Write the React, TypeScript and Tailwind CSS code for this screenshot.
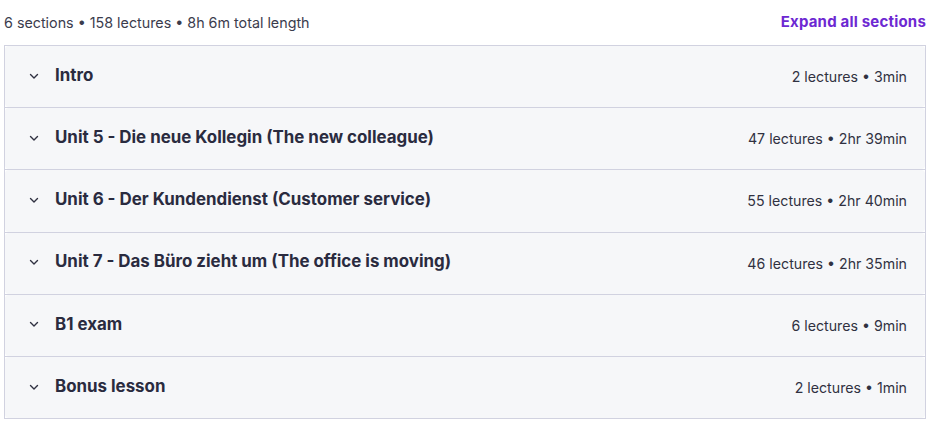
import React from "react";

const sections = [
  { title: "Intro", meta: "2 lectures • 3min" },
  { title: "Unit 5 - Die neue Kollegin (The new colleague)", meta: "47 lectures • 2hr 39min" },
  { title: "Unit 6 - Der Kundendienst (Customer service)", meta: "55 lectures • 2hr 40min" },
  { title: "Unit 7 - Das Büro zieht um (The office is moving)", meta: "46 lectures • 2hr 35min" },
  { title: "B1 exam", meta: "6 lectures • 9min" },
  { title: "Bonus lesson", meta: "2 lectures • 1min" },
];

const Chevron = () => (
  <svg width="12" height="12" viewBox="0 0 12 12" fill="none" className="shrink-0">
    <path d="M2.5 4.5 6 8l3.5-3.5" stroke="#303141" strokeWidth="1.4" strokeLinecap="round" strokeLinejoin="round" />
  </svg>
);

export default function App() {
  return (
    <div className="w-[931px] h-[424px] bg-white pl-[4px] pr-[5px] font-['Inter',sans-serif] text-[#303141]">
      <div className="flex items-center justify-between h-[45px]">
        <span className="text-[14.3px] text-[#3b3c4d]">6 sections • 158 lectures • 8h 6m total length</span>
        <button className="text-[15px] tracking-[0.2px] font-bold text-[#6d28d2]">Expand all sections</button>
      </div>
      <div className="border border-[#d1d2e0]">
        {sections.map((s, i) => (
          <div key={i} className={i < sections.length - 1 ? "border-b border-[#d1d2e0]" : ""}>
            <div className="h-[61.2px] flex items-center bg-[#f6f7f9] rounded-[4px] pl-[23px] pr-[18px] pb-[2px]">
              <Chevron />
              <h3 className="ml-[15px] flex-1 text-[16.9px] font-bold text-[#2a2b3f]">{s.title}</h3>
              <span className="mt-[2px] text-[14.2px] text-[#303141]">{s.meta}</span>
            </div>
          </div>
        ))}
      </div>
    </div>
  );
}
